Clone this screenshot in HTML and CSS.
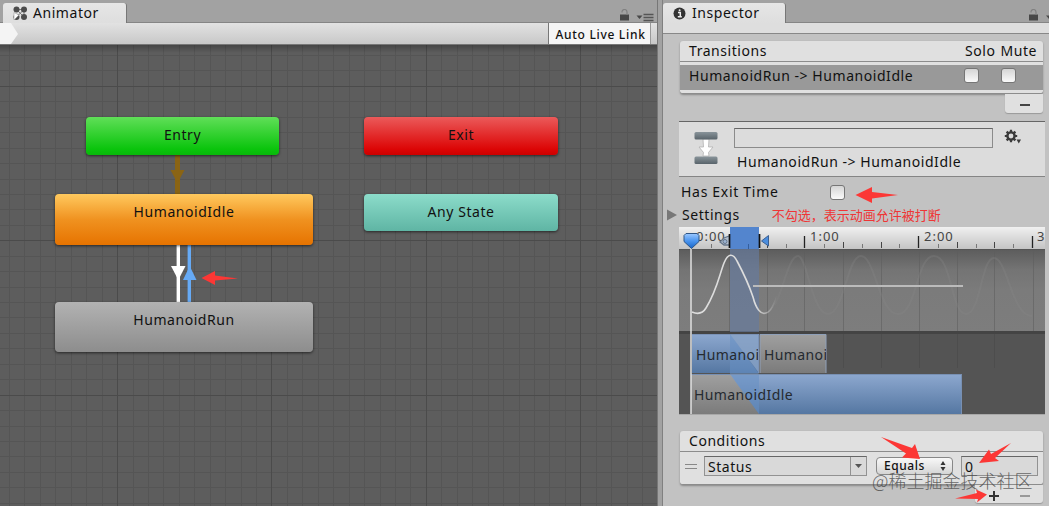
FILE: index.html
```html
<!DOCTYPE html>
<html lang="zh-CN">
<head>
    <meta charset="UTF-8">
    <meta name="viewport" content="width=device-width, initial-scale=1.0">
    <title>Animator</title>
    <link rel="stylesheet" href="styles.css">
</head>
<body>
    <div class="editor">
        <div class="animator">
            <div class="tab-bar">
                <div class="tab animator-tab">
                    <svg class="tab-icon" width="15" height="15" viewBox="0 0 15 15">
                        <path d="M3.500 3.500h7.500v7.500M3.500 3.500l7.500 7.500M11 3.500L4 10.500" stroke="#777" stroke-width="1" fill="none"/>
                        <g fill="#4c4c4c"><circle cx="3.500" cy="3.500" r="3"/><circle cx="11" cy="3.500" r="3"/><circle cx="3.500" cy="11" r="3"/><circle cx="11" cy="11" r="3"/></g>
                        <path d="M1 6.500v7.500l5-5z" fill="#fff" stroke="#888" stroke-width=".5"/>
                    </svg>
                    <span>Animator</span>
                </div>
                <div class="bar-icons">
                    <svg width="36" height="14" viewBox="0 0 36 14">
                        <path d="M1 5.500h9v6H1z" fill="#484848"/><path d="M3 3.500V3a2.500 2.500 0 0 1 5 0v3" fill="none" stroke="#808080" stroke-width="1.200"/>
                        <path d="M17.500 6.500h6l-3 3.500z" fill="#484848"/><path d="M24.500 5.500h10M24.500 8.500h10M24.500 11.500h10" stroke="#555" stroke-width="1.300"/>
                    </svg>
                </div>
            </div>
            <div class="toolbar">
                <svg class="crumb" width="19" height="21" viewBox="0 0 19 21"><path d="M0 0h11l7 11-7 10H0z" fill="#f4f4f4"/></svg>
                <div class="live-link">Auto Live Link</div>
            </div>
            <div class="canvas">
                <svg class="links" width="658" height="461" viewBox="0 45 658 461">
                    <path d="M177.500 154v42" stroke="#8a6414" stroke-width="5"/>
                    <path d="M170.500 170h14l-7 13z" fill="#8a6414"/>
                    <path d="M178.300 243v61" stroke="#fff" stroke-width="3.400"/>
                    <path d="M171 266h14.500l-7.200 14z" fill="#fff"/>
                    <path d="M189.300 243v61" stroke="#66aaf5" stroke-width="3.400"/>
                    <path d="M183 280h13.500l-6.800-14z" fill="#66aaf5"/>
                </svg>
                <div class="node entry">Entry</div>
                <div class="node exit">Exit</div>
                <div class="node idle">HumanoidIdle</div>
                <div class="node any">Any State</div>
                <div class="node run">HumanoidRun</div>
            </div>
        </div>

        <div class="inspector">
            <div class="tab-bar">
                <div class="tab inspector-tab">
                    <svg class="tab-icon" width="13" height="13" viewBox="0 0 13 13"><circle cx="6.500" cy="6.500" r="6" fill="#333"/><path d="M5 5.500h2.300v4M4.800 9.700h4" stroke="#eee" stroke-width="1.500" fill="none"/><circle cx="6.600" cy="3.200" r="1" fill="#eee"/></svg>
                    <span>Inspector</span>
                </div>
                <div class="bar-icons">
                    <svg width="21" height="14" viewBox="0 0 21 14">
                        <path d="M1 5.500h9v6H1z" fill="#484848"/><path d="M3 3.500V3a2.500 2.500 0 0 1 5 0v3" fill="none" stroke="#808080" stroke-width="1.200"/>
                        <path d="M18 6.500h6l-3 3.500z" fill="#484848"/>
                    </svg>
                </div>
            </div>
            <div class="strip"></div>
            <div class="content">
                <div class="list">
                    <div class="list-header"><span>Transitions</span><span class="solo">Solo</span><span class="mute">Mute</span></div>
                    <div class="transition-row">
                        <span>HumanoidRun -&gt; HumanoidIdle</span>
                        <i class="checkbox"></i>
                        <i class="checkbox"></i>
                    </div>
                </div>
                <div class="list-footer remove-only"><i class="minus"></i></div>

                <div class="title-card">
                    <svg class="transition-icon" width="24" height="34" viewBox="0 0 24 34">
                        <defs><linearGradient id="bar" x2="0" y2="1"><stop stop-color="#89949a"/><stop offset="1" stop-color="#59646b"/></linearGradient></defs>
                        <path d="M9 8h6l-.5 8H19l-4.500 5.500.5 3.500H9l.5-3.500L5 16h4.500z" fill="#fff" stroke="#aaa" stroke-width=".7"/>
                        <rect x=".5" y="1" width="23" height="7.500" rx="1.500" fill="url(#bar)"/>
                        <rect x=".5" y="25.500" width="23" height="7.500" rx="1.500" fill="url(#bar)"/>
                    </svg>
                    <div class="title-main">
                        <div class="name-field"></div>
                        <span>HumanoidRun -&gt; HumanoidIdle</span>
                    </div>
                    <svg class="gear" width="18" height="15" viewBox="0 0 18 15">
                        <circle cx="7" cy="7" r="3.600" fill="none" stroke="#3b3b3b" stroke-width="2.400"/>
                        <path d="M7 .8v2.500M7 10.700v2.500M.8 7h2.500M10.700 7h2.500M2.600 2.600l1.800 1.800M9.600 9.600l1.800 1.800M2.600 11.400l1.800-1.800M9.600 4.400l1.800-1.800" stroke="#3b3b3b" stroke-width="2.200"/>
                        <path d="M12.500 10.500h4.500L14.800 14.500z" fill="#3b3b3b"/>
                    </svg>
                </div>

                <div class="exit-time"><span>Has Exit Time</span><i class="checkbox"></i></div>
                <div class="settings">
                    <svg width="10" height="12" viewBox="0 0 10 12"><path d="M0 .5l10 5.500-10 5.500z" fill="#777"/></svg>
                    <span>Settings</span>
                    <span class="note">不勾选，表示动画允许被打断</span>
                </div>

                <svg class="timeline" width="366" height="188" viewBox="679 227 366 188">
                    <defs>
                        <linearGradient id="ruler" x2="0" y2="1"><stop stop-color="#f0f0f0"/><stop offset="1" stop-color="#c4c4c4"/></linearGradient>
                        <linearGradient id="graph" x2="0" y2="1"><stop stop-color="#5c5c5c"/><stop offset=".25" stop-color="#747474"/><stop offset=".5" stop-color="#7b7b7b"/><stop offset="1" stop-color="#7d7d7d"/></linearGradient>
                        <linearGradient id="blue" x2="0" y2="1"><stop stop-color="#8da8cf"/><stop offset="1" stop-color="#5577a2"/></linearGradient>
                        <linearGradient id="gray" x2="0" y2="1"><stop stop-color="#a0a0a0"/><stop offset="1" stop-color="#7b7b7b"/></linearGradient>
                        <linearGradient id="fade"><stop stop-color="#ddd"/><stop offset=".75" stop-color="#ddd"/><stop offset="1" stop-color="#ddd" stop-opacity="0"/></linearGradient>
                        <linearGradient id="pin" x2="0" y2="1"><stop stop-color="#9bc8ff"/><stop offset=".5" stop-color="#4a94ee"/><stop offset="1" stop-color="#1663c6"/></linearGradient>
                        <clipPath id="clip1"><path d="M692 334h66v39h-66z"/></clipPath>
                        <clipPath id="clip2"><path d="M760 334h66v39h-66z"/></clipPath>
                    </defs>
                    <rect x="679" y="227" width="366" height="22" fill="url(#ruler)"/>
                    <rect x="679" y="249" width="366" height="83" fill="url(#graph)"/>
                    <rect x="679" y="332" width="366" height="82" fill="#545454"/>
                    <path d="M679 332.500h366" stroke="#444" stroke-width="3"/>
                    <path d="M679 249.500h366" stroke="#555"/>
                    <g stroke="#5d5d5d" stroke-opacity=".55">
                        <path d="M729.500 250v81M767.500 250v81M804.500 250v81M843.500 250v81M881.500 250v81M919.500 250v81M957.500 250v81M994.500 250v81M1033.500 250v81"/>
                        <path d="M843.500 334v34M881.500 334v34M919.500 334v34M957.500 334v34M994.500 334v34" stroke="#474747"/>
                    </g>
                    <g fill="none" stroke="#8a8a8a" stroke-opacity=".28" stroke-width="2">
                        <path d="M775 305c9-18 14-49 23-49s14 58 30 58 19-58 33-58 18 58 37 58 18-58 36-58 17 58 32 58 15-56 28-56 18 58 38 58"/>
                    </g>
                    <path d="M711.500 244v4M748.500 244v4M786.500 244v4M824.500 244v4M862.500 244v4M899.500 244v4M938.500 244v4M976.500 244v4M1013.500 244v4" stroke="#777"/>
                    <path d="M767.500 242v6M843.500 242v6M881.500 242v6M957.500 242v6M994.500 242v6" stroke="#444"/>
                    <path d="M804.500 236v12M918.500 236v12M1032.500 236v12" stroke="#222" stroke-width="1.300"/>
                    <g class="ruler-text"><text x="696" y="241">0:00</text><text x="810" y="241">1:00</text><text x="924" y="241">2:00</text><text x="1037" y="241">3</text></g>
                    <path d="M729 236l-5 2-4 4 4 3h5" fill="#b3bfce" stroke="#65758a" stroke-width="1.300"/>
                    <circle cx="725" cy="241.500" r="2" fill="#9db4d2" stroke="#65758a"/>
                    <rect x="730" y="227" width="29" height="22" fill="#5385ce"/>
                    <path d="M748.500 244v5" stroke="#355f9d"/>
                    <path d="M729.500 234v14M759.500 234v14" stroke="#111" stroke-width="1.700"/>
                    <path d="M768.500 235.500v10.500l-7-5z" fill="#4b8ddd" stroke="#3a5f92"/>
                    <rect x="730" y="249" width="29" height="83" fill="#667b9c" fill-opacity=".7"/>
                    <path d="M753 286h210" stroke="#bbb" stroke-width="1.800"/>
                    <path d="M692 312c7 3 11 1 14-4 11-18 13-32 18-45 4-10 9-10 13-2 8 15 11 21 16 36 3 12 8 18 13 16 5-1 8-9 11-17" fill="none" stroke="url(#fade)" stroke-width="1.600"/>
                    <rect x="692" y="334" width="67" height="39" fill="url(#blue)"/>
                    <rect x="760" y="334" width="66" height="39" fill="url(#gray)"/>
                    <path d="M730 334h29v39z" fill="#88a2c6" fill-opacity=".8"/>
                    <path d="M692 334.500h66.500V373" fill="none" stroke="#7b93b8"/>
                    <path d="M760 373v-38.500h66V373" fill="none" stroke="#8fa0b9"/>
                    <rect x="691" y="374" width="271" height="40" fill="url(#blue)"/>
                    <path d="M691 374h39l29 40h-68z" fill="url(#gray)"/>
                    <path d="M730 334l29 40v40l-29-40z" fill="#668fc5" fill-opacity=".55"/>
                    <path d="M691 374.500h271M961.500 374v40" stroke="#7890b3"/>
                    <g class="clip-text"><text x="696" y="360" clip-path="url(#clip1)">Humanoi</text><text x="764" y="360" clip-path="url(#clip2)">Humanoi</text><text x="694" y="400">HumanoidIdle</text></g>
                    <path d="M691 248v166" stroke="#e2e2e2" stroke-width="1.500"/>
                    <path d="M686 233.500h11l2 2v6l-7.500 7-7.500-7v-6z" fill="url(#pin)" stroke="#2f5686"/>
                    <path d="M679 414.500h366" stroke="#a8a8a8"/>
                </svg>

                <div class="list conditions">
                    <div class="list-header">Conditions</div>
                    <div class="condition-row">
                        <i class="handle"></i>
                        <div class="field status"><span>Status</span><i class="drop"><svg width="7" height="4" viewBox="0 0 7 4"><path d="M0 0h7L3.500 4z" fill="#555"/></svg></i></div>
                        <div class="popup"><span>Equals</span><svg width="6" height="10" viewBox="0 0 6 10"><path d="M.5 4L3 0l2.500 4zM.5 6h5L3 10z" fill="#333"/></svg></div>
                        <div class="field value">0</div>
                    </div>
                </div>
                <div class="list-footer add-remove"><i class="plus"></i><i class="minus dim"></i></div>
            </div>
        </div>
    </div>

    <div class="watermark">@稀土掘金技术社区</div>
    <svg class="arrows" width="1049" height="506" viewBox="0 0 1049 506">
        <g fill="#fc3735">
            <path d="M201.500 278l13.500-7v4.500l23 3-23 2v4.500z"/>
            <path d="M855.500 195l16.500-8v5l26 3-26 3.500v4.500z"/>
            <path d="M920 459l-18-1.500 4-4-25-16.500 31 11 3-4z"/>
            <path d="M979 463l10-13.500 2 4.500 20-11-16 15 4 3z"/>
            <path d="M987 494.500l-11-5 1 3.500-22 5.500 23 .5-1 3.500z"/>
        </g>
    </svg>
</body>
</html>
```

FILE: styles.css
```css
* {
    box-sizing: border-box;
    margin: 0;
    padding: 0;
}
body {
    width: 1049px;
    height: 506px;
    overflow: hidden;
    position: relative;
    font-family: "Noto Sans", "Noto Sans CJK SC", sans-serif;
    font-size: 14px;
    line-height: 20px;
    letter-spacing: 0.55px;
    color: #111;
    background: #a2a2a2;
}
svg {
    display: block;
    flex-shrink: 0;
}
.editor {
    display: flex;
    height: 506px;
}
.animator {
    width: 658px;
    border-right: 1px solid #777;
}
.inspector {
    width: 387px;
    margin-left: 4px;
    border-left: 1px solid #808080;
    background: #c2c2c2;
}
.tab-bar {
    display: flex;
    justify-content: space-between;
    height: 23px;
    padding-top: 3px;
    background: #a2a2a2;
    border-bottom: 1px solid #858585;
}
.tab {
    display: flex;
    align-items: center;
    height: 20px;
    background: linear-gradient(#e6e6e6, #dedede);
    border-right: 1px solid #777;
    border-radius: 3px 3px 0 0;
}
.animator-tab {
    width: 124px;
    margin-left: 3px;
    padding-left: 10px;
    gap: 5px;
}
.inspector-tab {
    width: 123px;
    padding-left: 10px;
    gap: 6px;
}
.bar-icons {
    padding-top: 6px;
}
.animator .bar-icons {
    padding-right: 2px;
}
.toolbar {
    display: flex;
    justify-content: space-between;
    height: 22px;
    padding-right: 6px;
    background: linear-gradient(#e2e2e2, #c8c8c8);
    border-bottom: 1px solid #777;
}
.live-link {
    width: 103px;
    padding-left: 2px;
    border-left: 1px solid #777;
    border-right: 1px solid #999;
    background: #f5f5f5;
    text-align: center;
    font-size: 12px;
    font-weight: 500;
    line-height: 24px;
    letter-spacing: 0.7px;
}
.canvas {
    position: relative;
    height: 461px;
    background:
        linear-gradient(rgba(0, 0, 0, 0.25), transparent 8px),
        repeating-linear-gradient(to right, transparent 0 117px, #4b4b4b 117px 118px, transparent 118px 154.4px),
        repeating-linear-gradient(to bottom, transparent 0 41px, #4b4b4b 41px 42px, transparent 42px 154.4px),
        repeating-linear-gradient(to right, transparent 0 9px, #555 9px 10px, transparent 10px 15.44px),
        repeating-linear-gradient(to bottom, transparent 0 10px, #555 10px 11px, transparent 11px 15.44px),
        #5d5d5d;
}
.links {
    position: absolute;
    left: 0;
    top: 0;
}
.node {
    position: absolute;
    padding-top: 8px;
    border-radius: 4px;
    text-align: center;
    box-shadow: 0 1px 3px rgba(0, 0, 0, 0.6);
}
.entry {
    left: 86px;
    top: 72px;
    width: 193px;
    height: 38px;
    background: linear-gradient(#60df58, #0ac40c 85%, #08b80a);
}
.exit {
    left: 364px;
    top: 72px;
    width: 194px;
    height: 38px;
    background: linear-gradient(#eb5a5a, #dc0505 85%, #cc0000);
}
.idle {
    left: 55px;
    top: 149px;
    width: 258px;
    height: 51px;
    background: linear-gradient(#ffc95e, #f09220 50%, #e67300);
}
.any {
    left: 364px;
    top: 149px;
    width: 194px;
    height: 37px;
    background: linear-gradient(#8cdcca, #5fb5a4);
}
.run {
    left: 55px;
    top: 257px;
    width: 258px;
    height: 50px;
    background: linear-gradient(#b2b2b2, #8d8d8d);
}
.strip {
    height: 11px;
    background: #dedede;
    border-bottom: 1px solid #888;
}
.content {
    display: flex;
    flex-direction: column;
    padding: 7px 4px 0 16px;
}
.list {
    width: 363px;
    margin-left: 1px;
    border-radius: 3px;
    background: #e0e0e0;
    border-bottom: 1px solid #8c8c8c;
    box-shadow: 0 1px 2px rgba(0, 0, 0, 0.3);
}
.list-header {
    display: flex;
    height: 21px;
    padding: 0 6px 0 9px;
    border-bottom: 1px solid #8c8c8c;
}
.solo {
    margin-left: auto;
}
.mute {
    margin-left: 5px;
}
.transition-row {
    display: flex;
    align-items: center;
    height: 25px;
    margin: 3px 0;
    padding: 0 27px 4px 9px;
    background: #999;
}
.transition-row span {
    flex: 1;
}
.checkbox {
    width: 15px;
    height: 15px;
    border: 1px solid #767676;
    border-radius: 3px;
    background: linear-gradient(#d5d5d5, #fafafa);
}
.transition-row .checkbox + .checkbox {
    margin-left: 22px;
}
.list-footer {
    display: flex;
    align-items: center;
    align-self: flex-end;
    margin-right: 2px;
    border-radius: 0 0 3px 3px;
    background: #e0e0e0;
    box-shadow: 0 1px 1px #999;
}
.remove-only {
    width: 38px;
    height: 19px;
    padding: 3px 0 0 15px;
}
.minus {
    width: 10px;
    height: 2px;
    background: #444;
}
.dim {
    background: #999;
}
.title-card {
    display: flex;
    width: 366px;
    height: 56px;
    margin-top: 8px;
    border-top: 1px solid #666;
    border-bottom: 1px solid #858585;
    background: #dcdcdc;
}
.transition-icon {
    margin: 9px 0 0 15px;
}
.title-main {
    width: 259px;
    margin-left: 16px;
    padding-top: 6px;
}
.name-field {
    height: 20px;
    margin-bottom: 4px;
    border: 1px solid #8b8b8b;
    border-top-color: #666;
}
.title-main span {
    padding-left: 3px;
}
.gear {
    margin: 7px 0 0 11px;
}
.exit-time {
    display: flex;
    align-items: center;
    height: 26px;
    margin-top: 2px;
    padding-left: 2px;
    letter-spacing: 0.7px;
}
.exit-time span {
    width: 149px;
}
.settings {
    display: flex;
    align-items: center;
    height: 20px;
    margin: 0 0 2px -12px;
    gap: 5px;
}
.note {
    margin-left: 27px;
    font-family: "Noto Sans CJK SC", sans-serif;
    font-size: 13px;
    letter-spacing: 0;
    color: #ef3535;
}
.ruler-text {
    font-size: 13px;
    letter-spacing: 1px;
    fill: #444;
}
.clip-text {
    letter-spacing: 0.4px;
    fill: #252a30;
}
.conditions {
    height: 54px;
    margin-top: 16px;
}
.condition-row {
    display: flex;
    align-items: center;
    padding: 4px 5px 0 5px;
}
.handle {
    width: 12px;
    height: 5px;
    margin-right: 7px;
    border-top: 1px solid #888;
    border-bottom: 1px solid #888;
}
.field {
    display: flex;
    height: 20px;
    border: 1px solid #929292;
    border-top-color: #666;
    background: #d9d9d9;
    line-height: 20px;
}
.status {
    width: 163px;
    padding-left: 3px;
    justify-content: space-between;
}
.drop {
    display: flex;
    align-items: center;
    justify-content: center;
    width: 16px;
    border-left: 1px solid #929292;
}
.popup {
    display: flex;
    align-items: center;
    justify-content: space-between;
    width: 77px;
    height: 18px;
    margin: 0 8px 0 9px;
    padding: 0 6px 0 7px;
    border: 1px solid #888;
    border-radius: 4px;
    background: linear-gradient(#f8f8f8, #d5d5d5);
    font-size: 12px;
    font-weight: 500;
}
.value {
    width: 77px;
    padding-left: 3px;
}
.add-remove {
    width: 68px;
    height: 18px;
    padding: 3px 13px 0 14px;
    justify-content: space-between;
}
.plus {
    width: 10px;
    height: 10px;
    background:
        linear-gradient(#333, #333) center / 10px 2px no-repeat,
        linear-gradient(#333, #333) center / 2px 10px no-repeat;
}
.watermark {
    position: absolute;
    left: 872px;
    top: 468px;
    font-family: "Noto Sans CJK SC", sans-serif;
    font-size: 18px;
    font-weight: 300;
    line-height: 24px;
    letter-spacing: 0;
    white-space: nowrap;
    color: rgba(70, 70, 70, 0.8);
}
.arrows {
    position: absolute;
    left: 0;
    top: 0;
    pointer-events: none;
}
```
